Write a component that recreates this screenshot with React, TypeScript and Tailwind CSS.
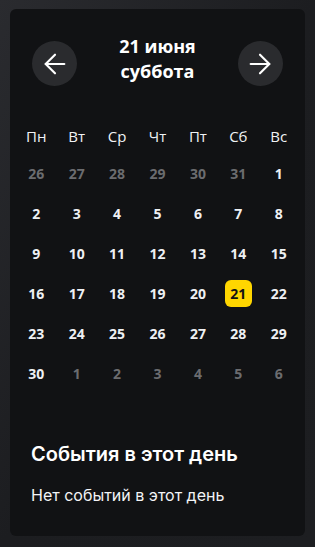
import { ArrowLeft, ArrowRight } from "lucide-react";

const weekDays = ["Пн", "Вт", "Ср", "Чт", "Пт", "Сб", "Вс"];

type Day = { n: number; muted?: boolean; active?: boolean };

const days: Day[] = [
  ...[26, 27, 28, 29, 30, 31].map((n) => ({ n, muted: true })),
  ...Array.from({ length: 30 }, (_, i) => ({ n: i + 1, active: i + 1 === 21 })),
  ...[1, 2, 3, 4, 5, 6].map((n) => ({ n, muted: true })),
];

const App = () => {
  return (
    <div className="min-h-[547px] w-[315px] bg-gradient-to-br from-[#2a2b2f] via-[#1c1d20] to-[#1d1e21] pt-[9px] px-[10px] pb-[11px]">
      <div className="bg-[#111214] rounded-[6px] h-[527px] px-[6px] pt-[25px] font-['Open_Sans',sans-serif] text-white">
        {/* header */}
        <div className="flex items-start justify-between px-[16px]">
          <button className="mt-[7px] w-[45px] h-[45px] rounded-full bg-[#2a2b2e] flex items-center justify-center">
            <ArrowLeft size={32} strokeWidth={1.6} />
          </button>
          <div className="text-center text-[18px] font-bold leading-[25px]">
            <div>21 июня</div>
            <div>суббота</div>
          </div>
          <button className="mt-[7px] w-[45px] h-[45px] rounded-full bg-[#2a2b2e] flex items-center justify-center">
            <ArrowRight size={32} strokeWidth={1.6} />
          </button>
        </div>

        {/* calendar */}
        <div className="grid grid-cols-7 mt-[33px]">
          {weekDays.map((d) => (
            <div key={d} className="h-[34px] flex items-center justify-center text-[15px] text-[#f0f2f5]">
              {d}
            </div>
          ))}
          {days.map((d, i) => (
            <div key={i} className="h-[40px] flex items-center justify-center">
              <span
                className={
                  d.active
                    ? "w-[27px] h-[27px] rounded-[6px] bg-[#ffd600] text-[#111214] flex items-center justify-center text-[14px] font-bold"
                    : d.muted
                    ? "text-[14px] font-bold text-[#6b6c6f]"
                    : "text-[14px] font-bold text-[#eef0f3]"
                }
              >
                {d.n}
              </span>
            </div>
          ))}
        </div>

        {/* events */}
        <div className="px-[15px] mt-[48px] font-['Inter',sans-serif]">
          <h3 className="text-[20px] font-semibold leading-[26px]">События в этот день</h3>
          <p className="text-[16px] leading-[22px] mt-[17px] text-[#f3f4f6]">Нет событий в этот день</p>
        </div>
      </div>
    </div>
  );
};

export default App;
